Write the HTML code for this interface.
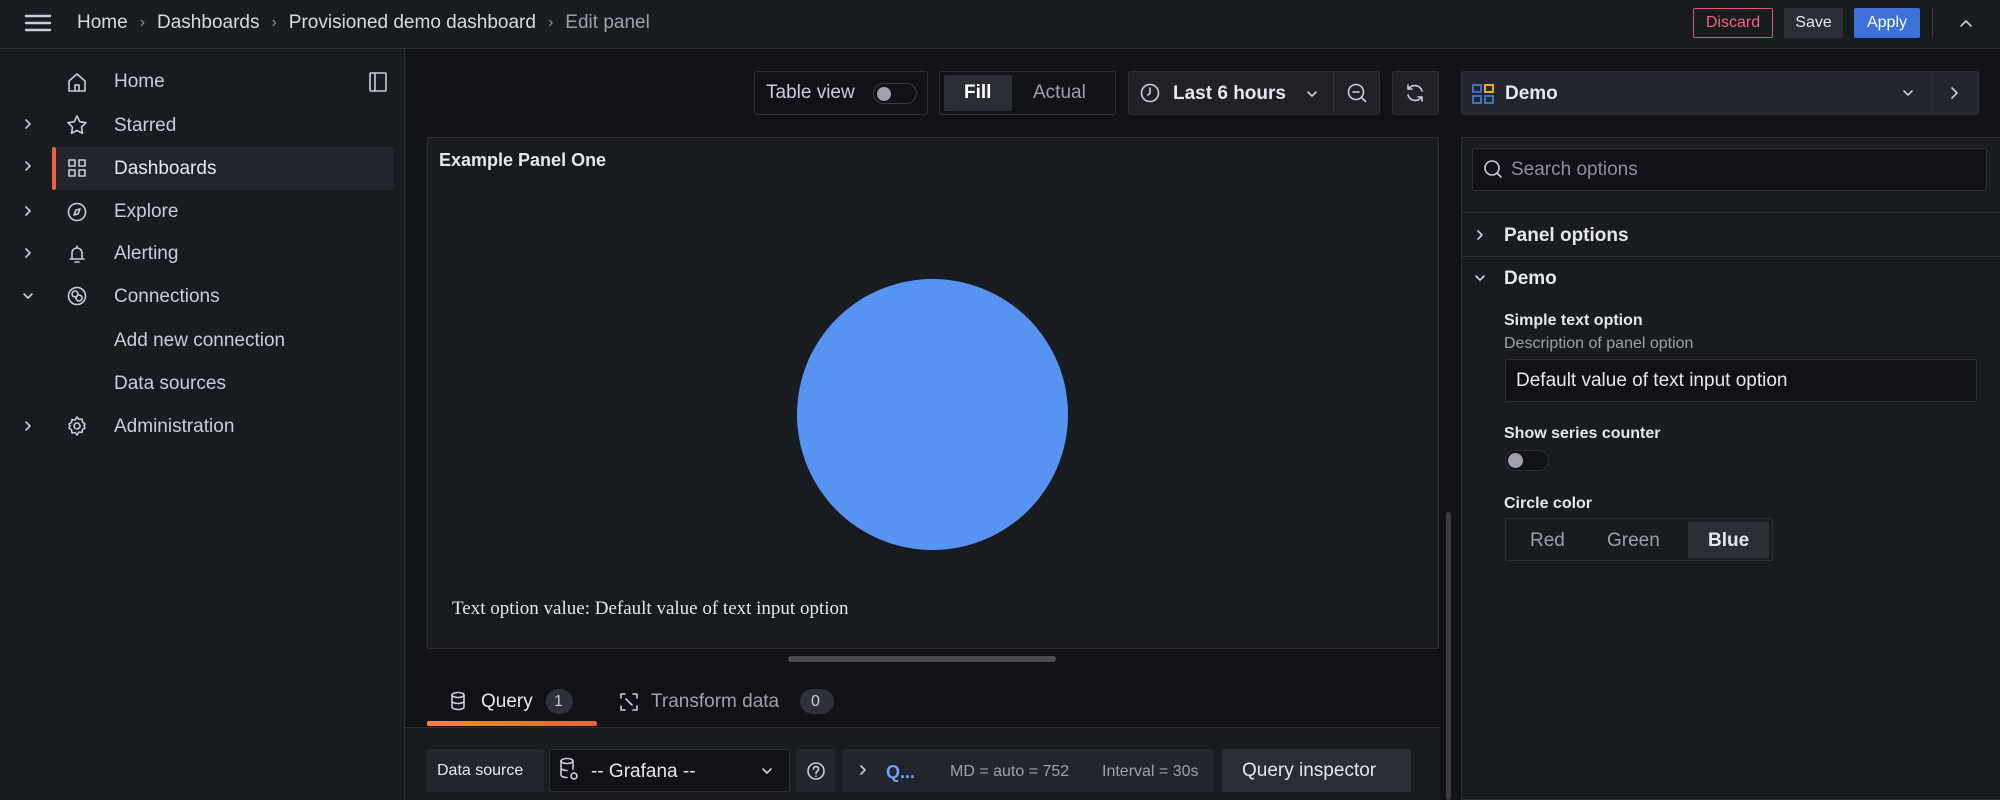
<!DOCTYPE html>
<html><head><meta charset="utf-8"><style>
*{box-sizing:border-box;margin:0;padding:0}
body{width:2000px;height:800px;overflow:hidden;background:#111217;font-family:"Liberation Sans",sans-serif;color:#ccccdc;position:relative}
.a{position:absolute}
.t{position:absolute;white-space:nowrap;line-height:1}
svg{position:absolute;fill:none;stroke:#ccccdc;stroke-width:1.6;stroke-linecap:round;stroke-linejoin:round}
.box{position:absolute;border:1px solid #2c2f36;border-radius:3px}
.btn{position:absolute;display:flex;align-items:center;justify-content:center;font-size:16px;border-radius:2px}
.bc{position:absolute;left:77px;top:0;height:46px;display:flex;align-items:center;font-size:19px;color:#d8d9e0;white-space:nowrap}
.bc i{font-style:normal;color:#8e8e9e;font-size:16px;margin:0 12px}
</style></head><body>
<!-- topbar -->
<div class="a" style="left:0;top:0;width:2000px;height:49px;background:#181b1f;border-bottom:1px solid #2c2f36"></div>
<svg style="left:24px;top:13px" width="28" height="20" viewBox="0 0 28 20"><path d="M2 3h24M2 10h24M2 17h24" stroke-width="2.4"/></svg>
<div class="bc">Home<i>›</i>Dashboards<i>›</i>Provisioned demo dashboard<i>›</i><span style="color:#9fa0aa">Edit panel</span></div>
<div class="btn" style="left:1693px;top:8px;width:80px;height:30px;border:1px solid #e0526b;color:#ff5f7d">Discard</div>
<div class="btn" style="left:1784px;top:8px;width:59px;height:30px;background:#2a2d33;color:#e6e6ee">Save</div>
<div class="btn" style="left:1854px;top:8px;width:66px;height:30px;background:#3d71d9;color:#fff">Apply</div>
<div class="a" style="left:1932px;top:9px;width:1px;height:28px;background:#3a3d44"></div>
<svg style="left:1958px;top:16px" width="16" height="14" viewBox="0 0 16 14"><path d="M3 10l5-5 5 5"/></svg>
<!-- sidebar -->
<div class="a" style="left:0;top:49px;width:405px;height:751px;background:#181b1f;border-right:1px solid #2c2f36"></div>
<div class="a" style="left:52px;top:147px;width:342px;height:43px;background:#22252b;border-radius:2px"></div>
<div class="a" style="left:52px;top:147px;width:4px;height:43px;background:#f55f3e;border-radius:2px"></div>
<svg style="left:368px;top:71px" width="20" height="22" viewBox="0 0 20 22"><rect x="2" y="2" width="16" height="18" rx="1"/><path d="M7 2v18"/></svg>
<svg style="left:22px;top:118px" width="12" height="300" viewBox="0 0 12 300"><path d="M4 2l4 4-4 4M4 44l4 4-4 4M4 89l4 4-4 4M4 131l4 4-4 4M2 176l4 4 4-4"/></svg>
<svg style="left:22px;top:419px" width="12" height="14" viewBox="0 0 12 14"><path d="M4 3l4 4-4 4"/></svg>
<svg style="left:66px;top:71px" width="22" height="22" viewBox="0 0 22 22"><path d="M3 10l8-7 8 7v10H3z M9 20v-6h4v6"/></svg>
<svg style="left:66px;top:114px" width="22" height="22" viewBox="0 0 22 22"><path d="M11 2l2.8 5.8 6.2.9-4.5 4.4 1 6.2L11 16.4 5.5 19.3l1-6.2L2 8.7l6.2-.9z"/></svg>
<svg style="left:66px;top:157px" width="22" height="22" viewBox="0 0 22 22"><rect x="3" y="3" width="6" height="6"/><rect x="13" y="3" width="6" height="6"/><rect x="3" y="13" width="6" height="6"/><rect x="13" y="13" width="6" height="6"/></svg>
<svg style="left:66px;top:201px" width="22" height="22" viewBox="0 0 22 22"><circle cx="11" cy="11" r="8.5"/><path d="M14 8l-2 5-4 1 2-5z"/></svg>
<svg style="left:66px;top:243px" width="22" height="22" viewBox="0 0 22 22"><path d="M6 16V10a5 5 0 0110 0v6zM4 16h14M9 19h4M11 3v2"/></svg>
<svg style="left:66px;top:285px" width="22" height="22" viewBox="0 0 22 22"><circle cx="11" cy="11" r="8.5"/><circle cx="9" cy="9" r="3"/><circle cx="13" cy="13" r="3"/></svg>
<svg style="left:66px;top:415px" width="22" height="22" viewBox="0 0 22 22"><circle cx="11" cy="11" r="3"/><path d="M11 2l2 2.5 3-.5.5 3L19 9l-1 2 1 2-2.5 1.5-.5 3-3-.5L11 20l-2-2.5-3 .5-.5-3L3 13l1-2-1-2 2.5-1.5.5-3 3 .5z"/></svg>
<div class="t" style="left:114px;top:72px;font-size:19px">Home</div>
<div class="t" style="left:114px;top:116px;font-size:19px">Starred</div>
<div class="t" style="left:114px;top:159px;font-size:19px;color:#e6e6ee">Dashboards</div>
<div class="t" style="left:114px;top:202px;font-size:19px">Explore</div>
<div class="t" style="left:114px;top:244px;font-size:19px">Alerting</div>
<div class="t" style="left:114px;top:287px;font-size:19px">Connections</div>
<div class="t" style="left:114px;top:331px;font-size:19px">Add new connection</div>
<div class="t" style="left:114px;top:374px;font-size:19px">Data sources</div>
<div class="t" style="left:114px;top:417px;font-size:19px">Administration</div>
<!-- toolbar -->
<div class="box" style="left:754px;top:71px;width:174px;height:44px"></div>
<div class="t" style="left:766px;top:83px;font-size:19px">Table view</div>
<div class="a" style="left:873px;top:83px;width:44px;height:21px;border:1px solid #3a3d44;border-radius:11px"></div>
<div class="a" style="left:877px;top:87px;width:14px;height:14px;background:#9fa0aa;border-radius:50%"></div>
<div class="box" style="left:939px;top:71px;width:177px;height:44px"></div>
<div class="a" style="left:944px;top:75px;width:68px;height:36px;background:#2a2d33;border-radius:2px"></div>
<div class="t" style="left:964px;top:83px;font-size:19px;color:#fff;font-weight:bold">Fill</div>
<div class="t" style="left:1033px;top:83px;font-size:19px;color:#9fa0aa">Actual</div>
<div class="a" style="left:1128px;top:71px;width:252px;height:44px;background:#1f2127;border:1px solid #2c2f36;border-radius:3px"></div>
<div class="a" style="left:1333px;top:72px;width:1px;height:42px;background:#2c2f36"></div>
<svg style="left:1139px;top:82px" width="22" height="22" viewBox="0 0 22 22"><circle cx="11" cy="11" r="8.5"/><path d="M11 6v5l-2 2"/></svg>
<div class="t" style="left:1173px;top:84px;font-size:19px;color:#e6e6ee;font-weight:bold">Last 6 hours</div>
<svg style="left:1306px;top:89px" width="12" height="10" viewBox="0 0 12 10"><path d="M2 3l4 4 4-4"/></svg>
<svg style="left:1346px;top:82px" width="22" height="22" viewBox="0 0 22 22"><circle cx="10" cy="10" r="7.5"/><path d="M7 10h6M15.5 15.5l4 4"/></svg>
<div class="a" style="left:1392px;top:71px;width:47px;height:44px;background:#1f2127;border:1px solid #2c2f36;border-radius:3px"></div>
<svg style="left:1404px;top:82px" width="22" height="22" viewBox="0 0 22 22"><path d="M18 9a7.5 7.5 0 00-13.5-2M4 13a7.5 7.5 0 0013.5 2M4 3v4h4M18 19v-4h-4"/></svg>
<div class="a" style="left:1461px;top:71px;width:518px;height:44px;background:#22252b;border:1px solid #2c2f36;border-radius:3px"></div>
<div class="a" style="left:1931px;top:72px;width:1px;height:42px;background:#2c2f36"></div>
<div class="a" style="left:1472px;top:84px;width:10px;height:9px;border:2px solid #3e6fc0"></div>
<div class="a" style="left:1484px;top:84px;width:10px;height:9px;border:2px solid #e9a91b"></div>
<div class="a" style="left:1472px;top:95px;width:10px;height:9px;border:2px solid #3e6fc0"></div>
<div class="a" style="left:1484px;top:95px;width:10px;height:9px;border:2px solid #3e6fc0"></div>
<div class="t" style="left:1505px;top:84px;font-size:19px;color:#e6e6ee;font-weight:bold">Demo</div>
<svg style="left:1902px;top:88px" width="12" height="10" viewBox="0 0 12 10"><path d="M2 3l4 4 4-4"/></svg>
<svg style="left:1948px;top:85px" width="12" height="16" viewBox="0 0 12 16"><path d="M4 3l5 5-5 5"/></svg>
<!-- panel -->
<div class="a" style="left:427px;top:137px;width:1012px;height:512px;background:#181b1f;border:1px solid #2c2f36;border-radius:2px"></div>
<div class="t" style="left:439px;top:151px;font-size:18px;color:#e6e6ee;font-weight:bold">Example Panel One</div>
<div class="a" style="left:797px;top:279px;width:271px;height:271px;border-radius:50%;background:#5794f2"></div>
<div class="t" style="left:452px;top:599px;font-size:19px;font-family:'Liberation Serif',serif;color:#e6e6ee">Text option value: Default value of text input option</div>
<div class="a" style="left:788px;top:656px;width:268px;height:6px;background:#4a4c52;border-radius:3px"></div>
<div class="a" style="left:1446px;top:512px;width:5px;height:288px;background:#3a3c42;border-radius:3px"></div>
<!-- tabs -->
<svg style="left:449px;top:691px" width="18" height="20" viewBox="0 0 18 20"><ellipse cx="9" cy="4" rx="6" ry="2.5"/><path d="M3 4v12c0 1.4 2.7 2.5 6 2.5s6-1.1 6-2.5V4M3 10c0 1.4 2.7 2.5 6 2.5s6-1.1 6-2.5"/></svg>
<div class="t" style="left:481px;top:692px;font-size:19px;color:#e6e6ee">Query</div>
<div class="a" style="left:546px;top:689px;width:27px;height:25px;background:#2e3138;border-radius:13px"></div>
<div class="t" style="left:554px;top:694px;font-size:16px;color:#ccccdc">1</div>
<svg style="left:619px;top:692px" width="20" height="20" viewBox="0 0 20 20"><path d="M2 6V2h4M14 2h4v4M18 14v4h-4M6 18H2v-4M7 7l6 6"/></svg>
<div class="t" style="left:651px;top:692px;font-size:19px;color:#9fa0aa">Transform data</div>
<div class="a" style="left:800px;top:689px;width:34px;height:25px;background:#2e3138;border-radius:13px"></div>
<div class="t" style="left:811px;top:694px;font-size:16px;color:#ccccdc">0</div>
<div class="a" style="left:427px;top:721px;width:170px;height:5px;background:linear-gradient(90deg,#ff8a1e,#f55f3e);border-radius:2px"></div>
<div class="a" style="left:405px;top:727px;width:1035px;height:73px;background:#181b1f;border-top:1px solid #2c2f36"></div>
<div class="a" style="left:427px;top:749px;width:117px;height:43px;background:#22252b;border-radius:2px"></div>
<div class="t" style="left:437px;top:763px;font-size:16px;color:#e6e6ee">Data source</div>
<div class="a" style="left:549px;top:749px;width:241px;height:43px;background:#111217;border:1px solid #2c2f36;border-radius:2px"></div>
<svg style="left:558px;top:756px" width="22" height="28" viewBox="0 0 22 28"><ellipse cx="9" cy="5" rx="6" ry="2.5"/><path d="M3 5v14c0 1.4 2.7 2.5 6 2.5M15 5v8M3 12c0 1.4 2.7 2.5 6 2.5"/><circle cx="16" cy="20" r="3"/></svg>
<div class="t" style="left:591px;top:762px;font-size:19px;color:#e6e6ee">-- Grafana --</div>
<svg style="left:761px;top:766px" width="12" height="10" viewBox="0 0 12 10"><path d="M2 3l4 4 4-4"/></svg>
<div class="a" style="left:796px;top:749px;width:39px;height:43px;background:#22252b;border-radius:2px"></div>
<svg style="left:805px;top:760px" width="22" height="22" viewBox="0 0 22 22"><circle cx="11" cy="11" r="8"/><path d="M8.5 9a2.5 2.5 0 114 2c-1 .7-1.5 1-1.5 2.5M11 16v.2"/></svg>
<div class="a" style="left:843px;top:749px;width:370px;height:43px;background:#22252b;border-radius:2px"></div>
<svg style="left:858px;top:763px" width="10" height="14" viewBox="0 0 10 14"><path d="M3 3l4 4-4 4"/></svg>
<div class="t" style="left:886px;top:763px;font-size:18px;color:#6e9fff;font-weight:bold">Q...</div>
<div class="t" style="left:950px;top:764px;font-size:16px;color:#9fa0aa">MD = auto = 752</div>
<div class="t" style="left:1102px;top:764px;font-size:16px;color:#9fa0aa">Interval = 30s</div>
<div class="a" style="left:1222px;top:749px;width:189px;height:43px;background:#2a2d33;border-radius:2px"></div>
<div class="t" style="left:1242px;top:761px;font-size:19px;color:#e6e6ee">Query inspector</div>
<!-- right options -->
<div class="a" style="left:1461px;top:137px;width:539px;height:663px;background:#181b1f;border:1px solid #2c2f36;border-right:none"></div>
<div class="a" style="left:1472px;top:148px;width:515px;height:43px;background:#111217;border:1px solid #2c2f36;border-radius:2px"></div>
<svg style="left:1482px;top:158px" width="22" height="22" viewBox="0 0 22 22"><circle cx="10" cy="10" r="7"/><path d="M15 15l4 4"/></svg>
<div class="t" style="left:1511px;top:160px;font-size:19px;color:#8e8e9e">Search options</div>
<div class="a" style="left:1462px;top:212px;width:538px;height:1px;background:#2c2f36"></div>
<svg style="left:1475px;top:228px" width="10" height="14" viewBox="0 0 10 14"><path d="M3 3l4 4-4 4"/></svg>
<div class="t" style="left:1504px;top:226px;font-size:19px;color:#e6e6ee;font-weight:bold">Panel options</div>
<div class="a" style="left:1462px;top:256px;width:538px;height:1px;background:#2c2f36"></div>
<svg style="left:1474px;top:273px" width="12" height="10" viewBox="0 0 12 10"><path d="M2 3l4 4 4-4"/></svg>
<div class="t" style="left:1504px;top:269px;font-size:19px;color:#e6e6ee;font-weight:bold">Demo</div>
<div class="t" style="left:1504px;top:313px;font-size:16px;color:#e6e6ee;font-weight:bold">Simple text option</div>
<div class="t" style="left:1504px;top:336px;font-size:16px;color:#9fa0aa">Description of panel option</div>
<div class="a" style="left:1505px;top:359px;width:472px;height:43px;background:#111217;border:1px solid #2c2f36;border-radius:2px"></div>
<div class="t" style="left:1516px;top:371px;font-size:19px;color:#e6e6ee">Default value of text input option</div>
<div class="t" style="left:1504px;top:426px;font-size:16px;color:#e6e6ee;font-weight:bold">Show series counter</div>
<div class="a" style="left:1505px;top:450px;width:44px;height:21px;border:1px solid #2c2f36;border-radius:11px;background:#111217"></div>
<div class="a" style="left:1508px;top:453px;width:15px;height:15px;border-radius:50%;background:#9fa0aa"></div>
<div class="t" style="left:1504px;top:496px;font-size:16px;color:#e6e6ee;font-weight:bold">Circle color</div>
<div class="a" style="left:1505px;top:518px;width:268px;height:43px;border:1px solid #2c2f36;border-radius:2px"></div>
<div class="a" style="left:1688px;top:522px;width:81px;height:36px;background:#2a2d33;border-radius:2px"></div>
<div class="t" style="left:1530px;top:531px;font-size:19px;color:#9fa0aa">Red</div>
<div class="t" style="left:1607px;top:531px;font-size:19px;color:#9fa0aa">Green</div>
<div class="t" style="left:1708px;top:531px;font-size:19px;color:#e6e6ee;font-weight:bold">Blue</div>
</body></html>
